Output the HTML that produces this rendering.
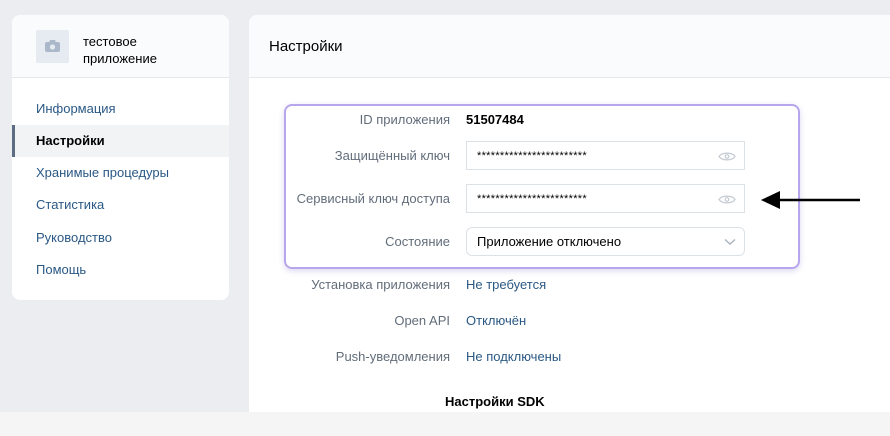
<!DOCTYPE html>
<html><head><meta charset="utf-8"><style>
*{margin:0;padding:0;box-sizing:border-box}
body{width:890px;height:436px;background:#ebedf0;font-family:"Liberation Sans",sans-serif;position:relative;overflow:hidden;font-size:13px;color:#000}
.a{position:absolute}
.card{background:#fff;border-radius:8px;position:absolute}
.lbl{position:absolute;right:440px;color:#626d7a;white-space:nowrap;text-align:right}
.val{position:absolute;left:466px;white-space:nowrap}
.link{color:#2a5885}
.inp{position:absolute;left:466px;width:279px;height:29px;border:1px solid #dce1e6;background:#fff;font-size:11px;padding:8px 0 0 10px;letter-spacing:0.3px}
.eye{position:absolute;right:8px;top:9px}
.mi{position:absolute;left:36px;color:#2a5885;font-size:13px}
</style></head><body>
<div class="card" style="left:12px;top:15px;width:217px;height:285px;overflow:hidden">
 <div class="a" style="left:0;top:0;width:217px;height:63px;background:#fafbfc;border-bottom:1px solid #e7e8ec"></div>
 <div class="a" style="left:24px;top:15px;width:33px;height:33px;background:#e5ebf1;border-radius:2px">
  <svg class="a" style="left:9px;top:10px" width="15" height="12" viewBox="0 0 15 12"><rect x="0" y="2" width="15" height="10" rx="2" fill="#aab8c9"/><rect x="4.5" y="0" width="6" height="3" rx="1" fill="#aab8c9"/><circle cx="7.5" cy="7" r="2.6" fill="#e5ebf1"/></svg>
 </div>
 <div class="a" style="left:71px;top:18px;line-height:17px;color:#000;font-size:13px">тестовое<br>приложение</div>
 <div class="a" style="left:0;top:110px;width:217px;height:32px;background:#f2f3f5;border-left:3px solid #5c6d82"></div>
</div>
<div class="mi" style="top:101px">Информация</div>
<div class="mi" style="top:133px;color:#000;font-weight:bold">Настройки</div>
<div class="mi" style="top:165px">Хранимые процедуры</div>
<div class="mi" style="top:197px">Статистика</div>
<div class="mi" style="top:230px">Руководство</div>
<div class="mi" style="top:262px">Помощь</div>

<div class="card" style="left:249px;top:15px;width:660px;height:420px;border-radius:8px 0 0 0">
 <div class="a" style="left:0;top:0;width:660px;height:63px;background:#fafbfc;border-bottom:1px solid #e7e8ec;border-radius:8px 0 0 0"></div>
 <div class="a" style="left:20px;top:23px;font-size:15px">Настройки</div>
</div>
<div class="a" style="left:284px;top:104px;width:516px;height:165px;border:2.5px solid #b7a6ec;border-radius:8px;box-shadow:0 2px 6px rgba(120,100,200,.25)"></div>

<div class="lbl" style="top:112px">ID приложения</div>
<div class="val" style="top:112px;font-weight:bold">51507484</div>
<div class="lbl" style="top:148px">Защищённый ключ</div>
<div class="inp" style="top:141px">************************<svg class="eye" width="18" height="11" viewBox="0 0 18 11"><path d="M1 5.5C4 1 14 1 17 5.5C14 10 4 10 1 5.5Z" fill="none" stroke="#c5cbd3" stroke-width="1.2"/><circle cx="9" cy="5.5" r="1.8" fill="none" stroke="#c5cbd3" stroke-width="1.2"/></svg></div>
<div class="lbl" style="top:191px">Сервисный ключ доступа</div>
<div class="inp" style="top:184px">************************<svg class="eye" width="18" height="11" viewBox="0 0 18 11"><path d="M1 5.5C4 1 14 1 17 5.5C14 10 4 10 1 5.5Z" fill="none" stroke="#c5cbd3" stroke-width="1.2"/><circle cx="9" cy="5.5" r="1.8" fill="none" stroke="#c5cbd3" stroke-width="1.2"/></svg></div>
<div class="lbl" style="top:234px">Состояние</div>
<div class="inp" style="top:227px;border-radius:6px;font-size:13px;padding-top:6px;letter-spacing:0">Приложение отключено<svg class="eye" style="top:10px" width="12" height="8" viewBox="0 0 12 8"><path d="M1 1.5L6 6L11 1.5" fill="none" stroke="#aab3bd" stroke-width="1.4"/></svg></div>

<div class="lbl" style="top:277px">Установка приложения</div>
<div class="val link" style="top:277px">Не требуется</div>
<div class="lbl" style="top:313px">Open API</div>
<div class="val link" style="top:313px">Отключён</div>
<div class="lbl" style="top:349px">Push-уведомления</div>
<div class="val link" style="top:349px">Не подключены</div>
<div class="a" style="left:445px;top:394px;font-weight:bold">Настройки SDK</div>

<div class="a" style="left:0;top:412px;width:890px;height:24px;background:#f5f5f5"></div>

<svg class="a" style="left:758px;top:189px" width="104" height="22" viewBox="0 0 104 22"><path d="M18 11H102" stroke="#000" stroke-width="2.5"/><path d="M3 11L22 2V20Z" fill="#000"/></svg>
</body></html>
